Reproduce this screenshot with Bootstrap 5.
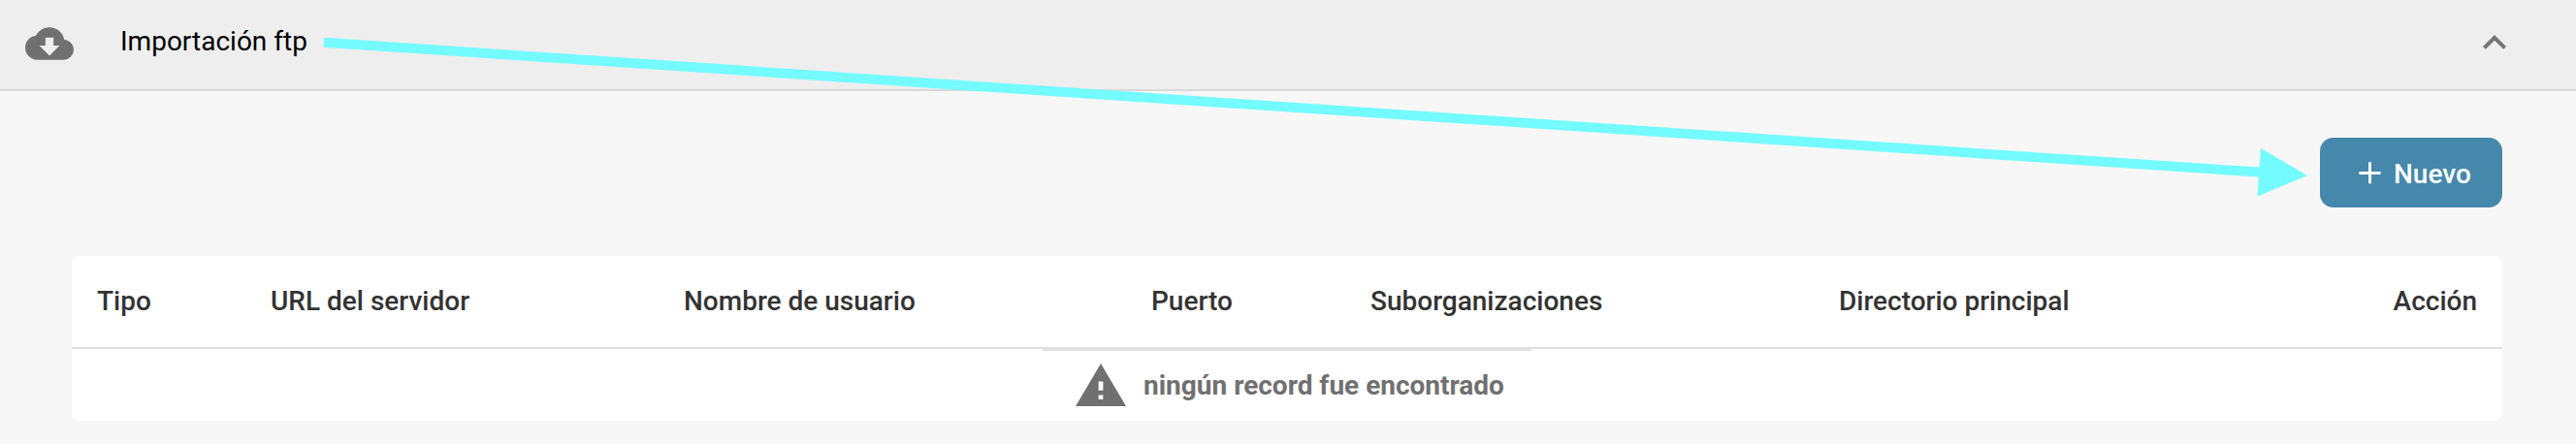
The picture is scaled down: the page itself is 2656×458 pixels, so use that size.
<!DOCTYPE html>
<html lang="es">
<head>
<meta charset="utf-8">
<meta name="viewport" content="width=device-width, initial-scale=1">
<title>Importación ftp</title>
<link href="https://cdn.jsdelivr.net/npm/bootstrap@5.3.0/dist/css/bootstrap.min.css" rel="stylesheet">
<style>
  body { font-family: Roboto, "Liberation Sans", sans-serif; font-size: 28px; line-height: 40px; background: #f7f7f7; color: #000; min-height: 458px; overflow: hidden; }
  svg { display: block; flex: none; }
  .panel-bar { height: 94px; background: #eee; border-bottom: 2px solid #d9d9d9; padding: 0 60px 0 26px; }
  .panel-title { color: #000; margin: 0 auto 0 48px; font-size: 28px; line-height: 40px; padding-bottom: 6px; }
  .cloud-icon { margin-top: -3px; }
  .chevron-icon { margin-top: -4px; }
  .panel-content { padding: 48px 76px 24px 74px; }
  .btn-new { --bs-btn-bg: #4588ac; --bs-btn-color: #fff; --bs-btn-hover-bg: #3a789a; --bs-btn-hover-color: #fff; width: 188px; height: 72px; border: 0; border-radius: 14px; font-size: 28px; font-weight: 500; padding: 0 0 0 40px; }
  .btn-new svg { margin-top: 1px; }
  .btn-new span { margin-left: 13px; padding-top: 4px; }
  .ftp-card { margin-top: 50px; height: 170px; background: #fff; border-radius: 8px; overflow: hidden; }
  .ftp-table { table-layout: fixed; border-collapse: separate; border-spacing: 0; --bs-table-bg: transparent; --bs-table-color: #333; }
  .ftp-table.table th { height: 96px; padding: 0 26px; font-weight: 500; vertical-align: middle; border-bottom: 2px solid #e0e0e0; white-space: nowrap; }
  .no-records { width: 504px; height: 74px; border-top: 2px solid #e0e0e0; padding-left: 34px; font-weight: 700; color: #707070; }
  .no-records svg { margin-top: -2px; }
  .no-records span { margin-left: 18px; }
  .pointer-arrow { left: 0; top: 0; pointer-events: none; }
</style>
</head>
<body class="position-relative">
  <header class="panel-bar d-flex align-items-center">
    <svg class="cloud-icon" width="50" height="50" viewBox="0 0 24 24" fill="#707070"><path d="M17 13l-5 5-5-5h3V9h4v4m5.35-2.97C18.67 6.59 15.64 4 12 4 9.11 4 6.6 5.64 5.35 8.04 2.34 8.36 0 10.9 0 14a6 6 0 0 0 6 6h13a5 5 0 0 0 5-5c0-2.64-2.05-4.78-4.65-4.97z"/></svg>
    <h1 class="panel-title fw-normal">Importación ftp</h1>
    <svg class="chevron-icon" width="48" height="48" viewBox="0 0 24 24" fill="#757575"><path d="M7.41 15.41L12 10.83l4.59 4.58L18 14l-6-6-6 6z"/></svg>
  </header>
  <main class="panel-content">
    <div class="d-flex justify-content-end">
      <button type="button" class="btn btn-new d-flex align-items-center">
        <svg width="23" height="23" viewBox="0 0 23 23" stroke="#fff" stroke-width="3"><path d="M11.5 .3v22M.3 11.5h22.2"/></svg>
        <span>Nuevo</span>
      </button>
    </div>
    <section class="ftp-card">
      <table class="table table-borderless ftp-table mb-0">
        <colgroup><col style="width:179px"><col style="width:426px"><col style="width:482px"><col style="width:226px"><col style="width:483px"><col><col style="width:200px"></colgroup>
        <thead>
          <tr><th>Tipo</th><th>URL del servidor</th><th>Nombre de usuario</th><th>Puerto</th><th>Suborganizaciones</th><th>Directorio principal</th><th class="text-end">Acción</th></tr>
        </thead>
      </table>
      <div class="no-records d-flex align-items-center mx-auto">
        <svg width="52" height="44" viewBox="1 2 22 19" preserveAspectRatio="none" fill="#707070"><path d="M1 21h22L12 2zm12-3h-2v-2h2zm0-4h-2v-4h2z"/></svg>
        <span>ningún record fue encontrado</span>
      </div>
    </section>
  </main>
  <svg class="pointer-arrow position-absolute" width="2656" height="458" viewBox="0 0 2656 458" fill="#73fbff"><path d="M334.3 38.8L2329.5 172.6 2331 153 2379 181 2327.7 202.5 2328.7 182.6 333.7 48.7z"/></svg>
<script src="https://cdn.jsdelivr.net/npm/bootstrap@5.3.0/dist/js/bootstrap.bundle.min.js"></script>
</body>
</html>
